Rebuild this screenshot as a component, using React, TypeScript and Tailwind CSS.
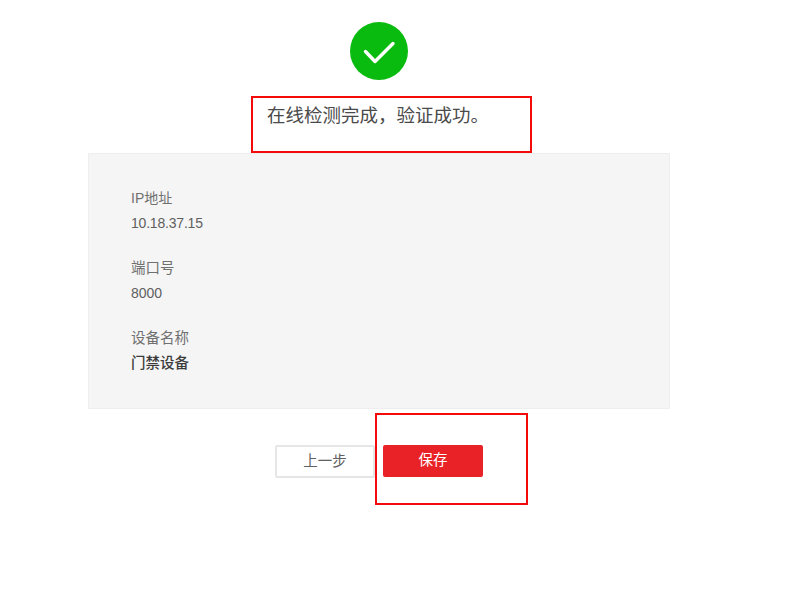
const cjk = "font-['Liberation_Sans','Noto_Sans_CJK_SC',sans-serif]";

function Field({ label, labelClass, value, valueClass }: { label: string; labelClass: string; value: string; valueClass: string }) {
  return (
    <div className="flex flex-col">
      <div className={`h-[25px] leading-[25px] text-[#707070] ${labelClass}`}>{label}</div>
      <div className={`h-[25px] leading-[25px] ${valueClass}`}>{value}</div>
    </div>
  );
}

export default function App() {
  return (
    <div className={`${cjk} relative h-[600px] w-[797px] overflow-hidden bg-white`}>
      <div className="flex flex-col pt-[22px]">
        <div className="ml-[350px] flex h-[58px] w-[58px] items-center justify-center rounded-full bg-[#09bb0f]">
          <svg width="58" height="58" viewBox="0 0 58 58" fill="none">
            <path d="M15.5 29.5 L25 39.5 L43 21.5" stroke="#ffffff" strokeWidth="3.4" strokeLinecap="round" strokeLinejoin="round" />
          </svg>
        </div>
        <div className="ml-[251px] mt-[16px] h-[57px] w-[281px] border-2 border-[#f50a0a] pl-[14px] pt-[5px] text-[18.5px] leading-[26px] text-[#4a4a4a]">
          在线检测完成，验证成功。
        </div>
        <div className="ml-[88px] flex h-[256px] w-[582px] flex-col gap-[20px] border border-[#eeeeee] bg-[#f5f5f5] pl-[42px] pt-[32px]">
          <Field label="IP地址" labelClass="text-[14px]" value="10.18.37.15" valueClass="text-[14px] tracking-[-0.2px] text-[#606060]" />
          <Field label="端口号" labelClass="text-[14.5px]" value="8000" valueClass="text-[14px] text-[#606060]" />
          <Field label="设备名称" labelClass="text-[14.5px]" value="门禁设备" valueClass="text-[14.5px] font-medium text-[#3c3c3c]" />
        </div>
        <div className="ml-[275px] mt-[36px] flex gap-[8px]">
          <button className="h-[33px] w-[100px] rounded-[2px] border-2 border-[#e6e6e6] bg-white text-[14.5px] text-[#606060]">上一步</button>
          <button className="h-[32px] w-[100px] rounded-[2px] bg-[#e92227] text-[14.5px] text-white">保存</button>
        </div>
      </div>
      <div className="absolute left-[375px] top-[413px] h-[92px] w-[153px] border-2 border-[#f50a0a]" />
    </div>
  );
}
